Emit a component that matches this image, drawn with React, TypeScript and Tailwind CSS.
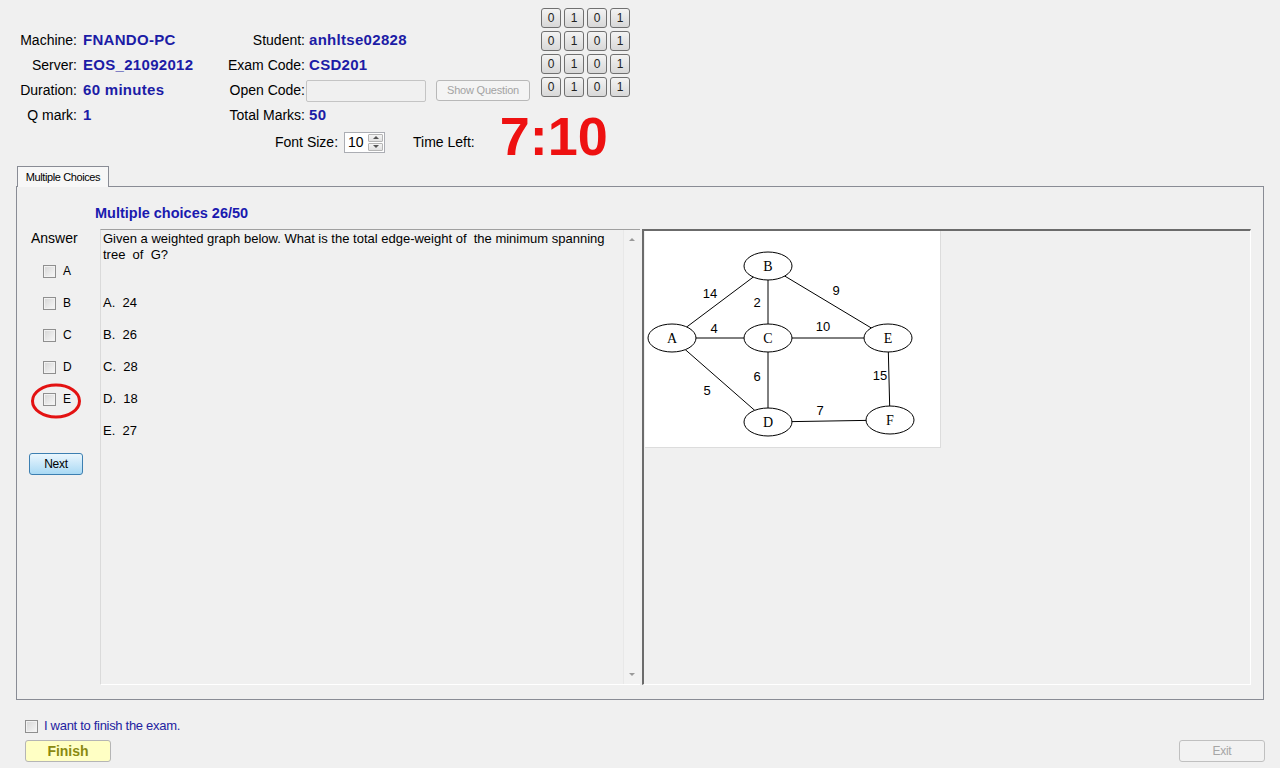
import React from "react";

const bits = ["0", "1", "0", "1"];
const options = ["A", "B", "C", "D", "E"];
const answers = ["A.  24", "B.  26", "C.  28", "D.  18", "E.  27"];

const nodes = [
  { id: "B", x: 123, y: 35 },
  { id: "A", x: 27, y: 107 },
  { id: "C", x: 123, y: 107 },
  { id: "E", x: 243, y: 107 },
  { id: "D", x: 123, y: 191 },
  { id: "F", x: 245, y: 189 },
];

const edges = [
  ["A", "B"],
  ["B", "C"],
  ["B", "E"],
  ["A", "C"],
  ["C", "E"],
  ["A", "D"],
  ["C", "D"],
  ["D", "F"],
  ["E", "F"],
];

const weights = [
  { w: "14", x: 65, y: 62 },
  { w: "2", x: 112, y: 71 },
  { w: "9", x: 191, y: 59 },
  { w: "4", x: 69, y: 97 },
  { w: "10", x: 178, y: 95 },
  { w: "6", x: 112, y: 145 },
  { w: "5", x: 62, y: 159 },
  { w: "15", x: 235, y: 144 },
  { w: "7", x: 175, y: 179 },
];

function CheckBox() {
  return (
    <span className="block h-[13px] w-[13px] shrink-0 border border-[#8f8f8f] bg-linear-to-br from-[#d6d6d6] to-[#f8f8f8] shadow-[inset_0_0_0_1px_#f2f2f2]" />
  );
}

function Row({ label, children }: { label: string; children: React.ReactNode }) {
  return (
    <>
      <div className="flex h-[25px] items-center justify-end">{label}</div>
      <div className="flex h-[25px] items-center">{children}</div>
    </>
  );
}

function Value({ children }: { children: React.ReactNode }) {
  return <span className="text-[15px] font-bold tracking-[0.3px] text-[#1c1ca6]">{children}</span>;
}

function Graph() {
  const at = (id: string) => nodes.find((n) => n.id === id)!;
  return (
    <svg width="295" height="216" viewBox="0 0 295 216">
      {edges.map(([a, b]) => (
        <line key={a + b} x1={at(a).x} y1={at(a).y} x2={at(b).x} y2={at(b).y} stroke="#000" strokeWidth="1" />
      ))}
      {nodes.map((n) => (
        <g key={n.id}>
          <ellipse cx={n.x} cy={n.y} rx="24" ry="14" fill="#fff" stroke="#000" strokeWidth="1" />
          <text x={n.x} y={n.y + 5} textAnchor="middle" fontSize="14" fontFamily="'Liberation Serif', serif">
            {n.id}
          </text>
        </g>
      ))}
      {weights.map((l) => (
        <text key={l.w} x={l.x} y={l.y + 5} textAnchor="middle" fontSize="13" fontFamily="'Liberation Sans', Arial, sans-serif">
          {l.w}
        </text>
      ))}
    </svg>
  );
}

export default function App() {
  return (
    <div className="h-[768px] w-[1280px] overflow-hidden bg-[#f0f0f0] text-[14px] text-black [font-family:'Liberation_Sans',Arial,sans-serif]">
      {/* header */}
      <div className="flex h-[156px] flex-col">
        <div className="flex items-start">
          <div className="grid w-[220px] grid-cols-[77px_1fr] gap-x-[6px] pt-[28px]">
            <Row label="Machine:">
              <Value>FNANDO-PC</Value>
            </Row>
            <Row label="Server:">
              <Value>EOS_21092012</Value>
            </Row>
            <Row label="Duration:">
              <Value>60 minutes</Value>
            </Row>
            <Row label="Q mark:">
              <Value>1</Value>
            </Row>
          </div>
          <div className="grid w-[321px] grid-cols-[85px_1fr] gap-x-[4px] pt-[28px]">
            <Row label="Student:">
              <Value>anhltse02828</Value>
            </Row>
            <Row label="Exam Code:">
              <Value>CSD201</Value>
            </Row>
            <Row label="Open Code:">
              <div className="-ml-[3px] h-[22px] w-[120px] rounded-[2px] border border-[#c4c4c4] bg-[#f0f0f0]" />
              <div className="ml-[10px] flex h-[21px] w-[94px] items-center justify-center rounded-[3px] border border-[#b8b8b8] bg-[#f4f4f4] text-[11px] tracking-[-0.2px] text-[#a3a3a3]">
                Show Question
              </div>
            </Row>
            <Row label="Total Marks:">
              <Value>50</Value>
            </Row>
          </div>
          <div className="mt-[8px] grid grid-cols-[repeat(4,20px)] grid-rows-[repeat(4,20px)] gap-[3px]">
            {[0, 1, 2, 3].map((r) =>
              bits.map((b, i) => (
                <div
                  key={`${r}-${i}`}
                  className="flex h-[20px] w-[20px] items-center justify-center rounded-[3px] border border-[#707070] bg-linear-to-b from-[#f3f3f3] to-[#d8d8d8] text-[12px] leading-none text-[#222]"
                >
                  {b}
                </div>
              ))
            )}
          </div>
        </div>
        <div className="flex h-[28px] items-center pl-[275px]">
          <span>Font Size:</span>
          <div className="ml-[6px] flex h-[21px] w-[41px] items-stretch border border-[#abadb3] bg-white">
            <span className="flex flex-1 items-center pl-[3px] text-[14px]">10</span>
            <div className="my-[1px] mr-[1px] flex w-[15px] flex-col gap-[1px]">
              <div className="flex flex-1 items-center justify-center rounded-[1px] border border-[#b5b5b5] bg-linear-to-b from-[#f5f5f5] to-[#e1e1e1]">
                <span className="h-0 w-0 border-x-[3px] border-b-[3px] border-x-transparent border-b-[#555]" />
              </div>
              <div className="flex flex-1 items-center justify-center rounded-[1px] border border-[#b5b5b5] bg-linear-to-b from-[#f5f5f5] to-[#e1e1e1]">
                <span className="h-0 w-0 border-x-[3px] border-t-[3px] border-x-transparent border-t-[#555]" />
              </div>
            </div>
          </div>
          <span className="ml-[28px]">Time Left:</span>
          <span className="-mt-[12px] ml-[25px] text-[54px] font-bold leading-none text-[#ee1111]">7:10</span>
        </div>
      </div>

      {/* tab control */}
      <div className="mx-[16px] mt-[10px] w-[1248px]">
        <div className="relative z-10 -mb-[1px] ml-[1px] flex h-[21px] w-[92px] items-center justify-center border border-b-0 border-[#898c95] bg-[#f7f7f7] text-[11px] tracking-[-0.4px]">
          Multiple Choices
        </div>
        <div className="flex h-[514px] flex-col border border-[#898c95] bg-[#f0f0f0]">
          <div className="mb-[7px] mt-[17px] h-[18px] pl-[78px] text-[14.5px] font-bold leading-[18px] text-[#1a1aaf]">
            Multiple choices 26/50
          </div>
          <div className="flex h-[456px]">
            {/* answer column */}
            <div className="flex w-[83px] flex-col">
              <div className="pl-[14px] text-[14px] leading-[18px]">Answer</div>
              <div className="mt-[8px] flex flex-col">
                {options.map((o) => (
                  <div key={o} className="relative flex h-[32px] items-center gap-[7px] pl-[26px] text-[12px]">
                    <CheckBox />
                    <span>{o}</span>
                    {o === "E" ? (
                      <svg className="absolute left-[13px] top-0" width="52" height="36" viewBox="0 0 52 36">
                        <ellipse cx="26" cy="18" rx="23.5" ry="16" fill="none" stroke="#e31212" strokeWidth="3" />
                      </svg>
                    ) : null}
                  </div>
                ))}
              </div>
              <button className="ml-[12px] mt-[38px] flex h-[22px] w-[54px] items-center justify-center rounded-[3px] border border-[#3c7fb1] bg-linear-to-b from-[#eaf6fd] to-[#a9d9f4] text-[12px] tracking-[-0.3px] text-black">
                Next
              </button>
            </div>

            {/* question box */}
            <div className="flex w-[540px] border-b border-l border-t border-b-white border-l-[#dadada] border-t-[#a0a0a0]">
              <div className="flex-1 whitespace-pre-wrap pl-[2px] pt-[1px] text-[13px] leading-[16px]">
                <div>
                  Given a weighted graph below. What is the total edge-weight of  the minimum spanning
                  <br />
                  tree  of  G?
                </div>
                <div className="mt-[24px] flex flex-col">
                  {answers.map((a) => (
                    <div key={a} className="flex h-[32px] items-center">
                      {a}
                    </div>
                  ))}
                </div>
              </div>
              <div className="flex w-[17px] flex-col items-center justify-between border-l border-[#e8e8e8] bg-[#f2f2f2] py-[8px]">
                <span className="h-0 w-0 border-x-[3px] border-b-[3px] border-x-transparent border-b-[#9a9a9a]" />
                <span className="h-0 w-0 border-x-[3px] border-t-[3px] border-x-transparent border-t-[#9a9a9a]" />
              </div>
            </div>

            {/* picture box */}
            <div className="ml-[2px] mr-[12px] flex-1 border-b border-l-2 border-r border-t-2 border-b-white border-l-[#6b6b6b] border-r-white border-t-[#6b6b6b] pl-[1px]">
              <div className="h-[217px] w-[296px] border-b border-r border-[#dcdcdc] bg-white">
                <Graph />
              </div>
            </div>
          </div>
        </div>
      </div>

      {/* footer */}
      <div className="flex items-end justify-between pl-[25px] pr-[15px]">
        <div className="flex flex-col">
          <div className="mt-[18px] flex h-[16px] items-center gap-[6px]">
            <CheckBox />
            <span className="text-[13px] tracking-[-0.3px] text-[#2323a0]">I want to finish the exam.</span>
          </div>
          <button className="mt-[6px] flex h-[22px] w-[86px] items-center justify-center rounded-[3px] border border-[#b5b5b5] bg-[#ffffc4] text-[14px] font-bold text-[#8a8a10]">
            Finish
          </button>
        </div>
        <button className="flex h-[22px] w-[86px] items-center justify-center rounded-[3px] border border-[#c0c0c0] bg-[#f2f2f2] text-[12px] tracking-[-0.3px] text-[#a6a6a6]">
          Exit
        </button>
      </div>
    </div>
  );
}
